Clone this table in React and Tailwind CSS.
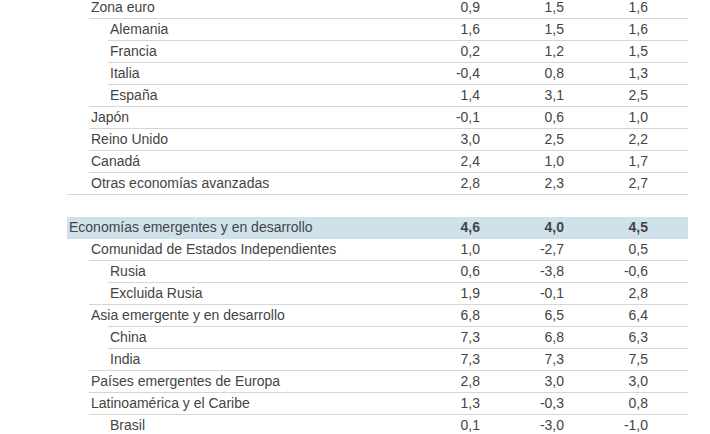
const rows = [
  { label: "Zona euro", indent: 1, line: 89, v: ["0,9", "1,5", "1,6"] },
  { label: "Alemania", indent: 2, line: 108, v: ["1,6", "1,5", "1,6"] },
  { label: "Francia", indent: 2, line: 108, v: ["0,2", "1,2", "1,5"] },
  { label: "Italia", indent: 2, line: 108, v: ["-0,4", "0,8", "1,3"] },
  { label: "España", indent: 2, line: 89, v: ["1,4", "3,1", "2,5"] },
  { label: "Japón", indent: 1, line: 89, v: ["-0,1", "0,6", "1,0"] },
  { label: "Reino Unido", indent: 1, line: 89, v: ["3,0", "2,5", "2,2"] },
  { label: "Canadá", indent: 1, line: 89, v: ["2,4", "1,0", "1,7"] },
  { label: "Otras economías avanzadas", indent: 1, line: 67, v: ["2,8", "2,3", "2,7"] },
  { blank: true },
  { label: "Economías emergentes y en desarrollo", indent: 0, line: null, hl: true, v: ["4,6", "4,0", "4,5"] },
  { label: "Comunidad de Estados Independientes", indent: 1, line: 89, v: ["1,0", "-2,7", "0,5"] },
  { label: "Rusia", indent: 2, line: 108, v: ["0,6", "-3,8", "-0,6"] },
  { label: "Excluida Rusia", indent: 2, line: 89, v: ["1,9", "-0,1", "2,8"] },
  { label: "Asia emergente y en desarrollo", indent: 1, line: 108, v: ["6,8", "6,5", "6,4"] },
  { label: "China", indent: 2, line: 108, v: ["7,3", "6,8", "6,3"] },
  { label: "India", indent: 2, line: 89, v: ["7,3", "7,3", "7,5"] },
  { label: "Países emergentes de Europa", indent: 1, line: 89, v: ["2,8", "3,0", "3,0"] },
  { label: "Latinoamérica y el Caribe", indent: 1, line: 89, v: ["1,3", "-0,3", "0,8"] },
  { label: "Brasil", indent: 2, line: 108, v: ["0,1", "-3,0", "-1,0"] },
];

const textX = [69, 91, 110];

function Row({ r }) {
  if (r.blank) return <div className="h-[22px]" />;
  return (
    <div className={r.hl ? "bg-[#cfe2ec]" : ""}>
      <div className="flex h-[21px] items-center">
        <div className="flex-1 whitespace-nowrap" style={{ paddingLeft: textX[r.indent] - 67 }}>
          {r.label}
        </div>
        {r.v.map((x, i) => (
          <div key={i} className={"w-[84px] text-right " + (r.hl ? "font-bold" : "")}>
            {x}
          </div>
        ))}
        <div className="w-[40px]" />
      </div>
      {r.line ? (
        <div className="h-px bg-[#d6d6d6]" style={{ marginLeft: r.line - 67 }} />
      ) : (
        <div className="h-px" />
      )}
    </div>
  );
}

export default function App() {
  return (
    <div className="w-[710px] h-[434px] overflow-hidden bg-white">
      <div
        className="-mt-[3px] ml-[67px] w-[621px] text-[14px] leading-[21px] text-[#444444]"
        style={{ fontFamily: '"Liberation Sans", Arial, sans-serif' }}
      >
        {rows.map((r, i) => (
          <Row key={i} r={r} />
        ))}
      </div>
    </div>
  );
}
